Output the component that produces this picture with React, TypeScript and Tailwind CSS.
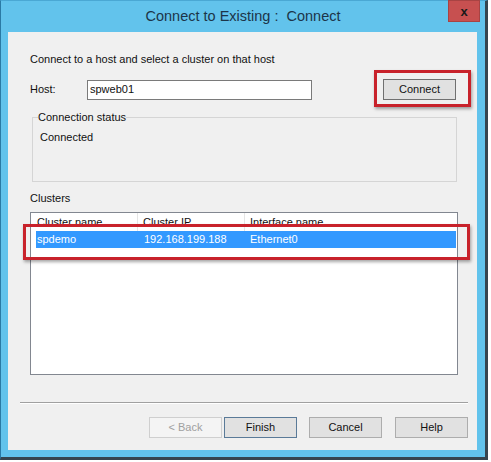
export default function App() {
  return (
    <div className="relative w-[491px] h-[462px] bg-white overflow-hidden font-['Liberation_Sans',Arial,sans-serif] text-[11px] leading-[15px] text-[#111]">
      <div className="w-[488px] h-[460px] flex flex-col bg-[#62c3ec] border-l border-t border-r-[3px] border-b-[3px] border-l-[#2a7aa5] border-t-[#4aa8d4] border-r-[#36454f] border-b-[#36454f]">
        <div className="relative h-[31px] flex items-center justify-center">
          <span className="text-[14.5px] text-[#1c3549]">Connect to Existing :&nbsp; Connect</span>
          <div className="absolute right-[5px] top-[-1px] w-[32px] h-[22px] bg-[#c75050] border border-[#a84343] flex items-center justify-center">
            <span className="text-[13px] font-bold leading-none text-[#1a1a1a]">x</span>
          </div>
        </div>
        <div className="ml-[7px] mr-[8px] mb-[7px] flex-1 bg-[#f0f0f0] flex flex-col">
          <div className="mt-[20px] ml-[22px]">Connect to a host and select a cluster on that host</div>
          <div className="mt-[12px] ml-[22px] flex items-center h-[21px]">
            <div className="w-[57px]">Host:</div>
            <div className="w-[225px] h-[20px] border border-[#7a7a7a] bg-white pl-[2px] flex items-center">spweb01</div>
            <div className="ml-[71px] w-[73px] h-[21px] border border-[#707070] bg-[#e1e1e1] flex items-center justify-center">Connect</div>
          </div>
          <fieldset className="mt-[10px] ml-[24px] w-[425px] h-[72px] border border-[#d5d5d5] pl-[5px]">
            <legend className="px-0 leading-[15px]">Connection status</legend>
            <div className="mt-[5px] ml-[2px]">Connected</div>
          </fieldset>
          <div className="mt-[9px] ml-[22px]">Clusters</div>
          <div className="mt-[6px] ml-[22px] w-[428px] h-[163px] border border-[#828790] bg-white">
            <div className="h-[18px] flex items-center">
              <div className="w-[107px] h-full pl-[6px] border-r border-[#e5e5e5] flex items-center">Cluster name</div>
              <div className="w-[107px] h-full pl-[5px] border-r border-[#e5e5e5] flex items-center">Cluster IP</div>
              <div className="pl-[5px] h-full flex items-center">Interface name</div>
            </div>
            <div className="h-[17px] ml-[5px] mr-[1px] bg-[#3399ff] text-white flex items-center">
              <div className="w-[106px] pl-[1px]">spdemo</div>
              <div className="w-[107px] pl-[2px]">192.168.199.188</div>
              <div className="pl-[1px]">Ethernet0</div>
            </div>
          </div>
          <div className="mt-[27px] ml-[12px] w-[448px] border-t border-t-[#a0a0a0] border-b border-b-white"></div>
          <div className="mt-[13px] ml-[141px] flex">
            <div className="w-[73px] h-[21px] border border-[#cfcfcf] bg-[#f4f4f4] text-[#a0a0a0] flex items-center justify-center">&lt; Back</div>
            <div className="ml-[2px] w-[73px] h-[21px] border border-[#5a7a98] bg-[#e1e1e1] flex items-center justify-center">Finish</div>
            <div className="ml-[12px] w-[73px] h-[21px] border border-[#adadad] bg-[#e1e1e1] flex items-center justify-center">Cancel</div>
            <div className="ml-[13px] w-[73px] h-[21px] border border-[#adadad] bg-[#e1e1e1] flex items-center justify-center">Help</div>
          </div>
        </div>
      </div>
      <div className="absolute left-[374px] top-[70px] w-[97px] h-[37px] border-[3px] border-[#c8222b] shadow-[1px_2px_3px_rgba(0,0,0,0.35)]"></div>
      <div className="absolute left-[23px] top-[224px] w-[447px] h-[36px] border-[3px] border-[#c8222b] shadow-[1px_2px_3px_rgba(0,0,0,0.35)]"></div>
    </div>
  );
}
